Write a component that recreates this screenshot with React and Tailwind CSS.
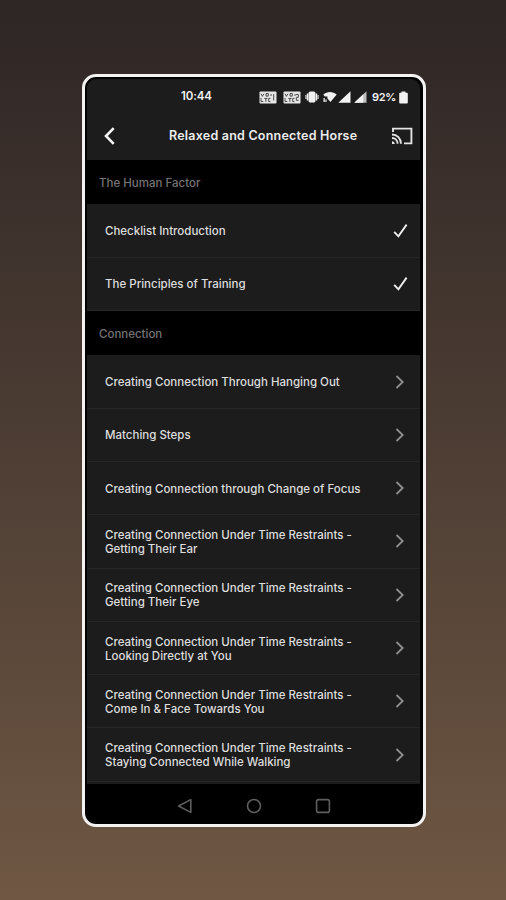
import React from "react";

const sections = [
  {
    title: "The Human Factor",
    lessons: [
      { title: ["Checklist Introduction"], done: true },
      { title: ["The Principles of Training"], done: true },
    ],
  },
  {
    title: "Connection",
    lessons: [
      { title: ["Creating Connection Through Hanging Out"] },
      { title: ["Matching Steps"] },
      { title: ["Creating Connection through Change of Focus"] },
      { title: ["Creating Connection Under Time Restraints -", "Getting Their Ear"] },
      { title: ["Creating Connection Under Time Restraints -", "Getting Their Eye"] },
      { title: ["Creating Connection Under Time Restraints -", "Looking Directly at You"] },
      { title: ["Creating Connection Under Time Restraints -", "Come In & Face Towards You"] },
      { title: ["Creating Connection Under Time Restraints -", "Staying Connected While Walking"] },
    ],
  },
];

export default function App() {
  return (
    <div className="flex h-[900px] w-[506px] flex-col bg-linear-to-b from-[#2e2625] to-[#6f5743] pt-[74px] pl-[82px] font-['Inter',sans-serif]">
      <div className="flex h-[753px] w-[344px] flex-col overflow-hidden rounded-[14px] border-[3px] border-[#f4f2f1] bg-black pt-[2px] pr-[3px] pl-[2px]">
        <div className="flex h-[81px] shrink-0 flex-col rounded-t-[9px] bg-[#1c1c1c]">
          <StatusBar />
          <Header />
        </div>

        <div className="h-[624px] shrink-0 overflow-hidden bg-[#1c1c1c]">
          {sections.map((section) => (
            <section key={section.title}>
              <h2 className="flex h-[44.4px] items-center bg-black pt-[2px] pl-3 text-[11.5px] font-medium text-[#747474]">
                {section.title}
              </h2>
              {section.lessons.map((lesson, idx) => (
                <LessonRow key={idx} lesson={lesson} />
              ))}
            </section>
          ))}
        </div>

        <NavBar />
      </div>
    </div>
  );
}

function StatusBar() {
  return (
    <div className="flex h-[36px] items-center pr-[12px] pl-[94px] text-[11.5px] font-semibold text-[#f2f2f2]">
      <span className="tracking-[-0.1px]">10:44</span>
      <div className="ml-auto flex items-center">
        <VolteIcon sim="1" />
        <div className="w-[6px]" />
        <VolteIcon sim="2" />

        {/* Vibrate */}
        <svg className="ml-[4px] h-3 w-[14px]" viewBox="0 0 14 12" fill="#f2f2f2">
          <rect x="3.6" y="0.5" width="6.8" height="11" rx="1.5" />
          <path d="M1.8 2.5h1.6v7H1.8zM0.4 4h1v4H0.4zM10.6 2.5h1.6v7h-1.6zM12.6 4h1v4h-1z" />
        </svg>

        {/* Wifi */}
        <svg className="ml-[4px] h-3 w-[14px]" viewBox="0 0 14 12" fill="#f2f2f2">
          <path d="M0.3 3.6C4 0.2 10 0.2 13.7 3.6L7.5 11 4.4 7.6V5.4H1.8z" />
          <path d="M0.5 7h1.3v4H0.5zM2.4 8.4h1.2V11H2.4z" />
        </svg>

        <SignalIcon />
        <div className="w-[2px]" />
        <SignalIcon faded />

        <span className="ml-[5px] text-[11px] tracking-[-0.3px]">92%</span>
        <svg className="ml-[3px] h-[13px] w-[9px]" viewBox="0 0 9 13" fill="#f2f2f2">
          <path d="M2.5 0.5h4v1.3H8a.8.8 0 0 1 .8.8v9a.9.9 0 0 1-.9.9H1.1a.9.9 0 0 1-.9-.9v-9a.8.8 0 0 1 .8-.8h1.5z" />
        </svg>
      </div>
    </div>
  );
}

/** Small carrier badge, one per SIM. */
function VolteIcon({ sim }) {
  return (
    <svg className="h-[13px] w-[18px]" viewBox="0 0 18 13" fill="none">
      <rect x="0.5" y="0.5" width="17" height="12" rx="1" fill="#e6e6e6" />
      <g stroke="#4a4a4a" strokeWidth="1">
        <path d="M2 2.8l1.4 2.6 1.4-2.6M7 2.5h2.3v2.6H7zM11 4h2" />
        <path d="M2 7v3.5h2.2M5.3 7.4h3.2M6.9 7.4v3.4M11.5 7.4H9.7v3.2h1.8" />
        {sim === "1" ? <path d="M14.7 3v6.5" /> : <path d="M13 3.5h2.4v2.8H13.3v3h2.4" />}
      </g>
    </svg>
  );
}

function SignalIcon({ faded }) {
  return (
    <svg className="ml-[1px] h-3 w-[13px]" viewBox="0 0 13 12">
      <path d="M0.3 11.7L12.5 0.3v11.4z" fill={faded ? "#bdbdbd" : "#f2f2f2"} />
      {faded && <path d="M0.3 11.7L9.3 3.3v8.4z" fill="#f2f2f2" />}
    </svg>
  );
}

function Header() {
  return (
    <div className="flex h-[41px] items-center pr-[7px] pl-[16px]">
      <svg className="h-[18px] w-[13px]" viewBox="0 0 13 18" fill="none" stroke="#f5f5f5" strokeWidth="2.6">
        <path d="M10.7 1.2L3 9l7.7 7.8" />
      </svg>
      <h1 className="ml-[53px] pt-[1px] whitespace-nowrap text-[12.5px] font-semibold tracking-[0.22px] text-[#ececec]">
        Relaxed and Connected Horse
      </h1>
      <svg className="ml-auto h-[18px] w-[22px]" viewBox="0 0 22 18" fill="none" stroke="#e4e4e4" strokeWidth="1.9">
        <path d="M2 5V1.6h18.4v14.8H13" />
        <path d="M1 7.5c5 0 9 4 9 9.3M1 11c3.2 0 5.6 2.5 5.6 5.8" />
        <path d="M1 14.2a2.8 2.8 0 0 1 2.7 2.8H1z" fill="#e4e4e4" stroke="none" />
      </svg>
    </div>
  );
}

function LessonRow({ lesson }) {
  return (
    <div className="flex h-[53.3px] items-center justify-between border-b border-[#272727] pr-[12px] pl-[18px]">
      <p className="pt-[1px] whitespace-nowrap text-[11.5px] leading-[14px] font-medium text-[#dedede]">
        {lesson.title.map((line) => (
          <span key={line} className="block">
            {line}
          </span>
        ))}
      </p>
      {lesson.done ? (
        <svg className="h-4 w-[15px] shrink-0" viewBox="0 0 15 16" fill="none" stroke="#ededed" strokeWidth="1.9">
          <path d="M1.2 8.8l4.2 4.5L13.6 1.6" />
        </svg>
      ) : (
        <svg className="mr-[3px] h-[14px] w-[10px] shrink-0" viewBox="0 0 10 14" fill="none" stroke="#8f8f8f" strokeWidth="1.8">
          <path d="M1.5 1l6.2 6-6.2 6" />
        </svg>
      )}
    </div>
  );
}

function NavBar() {
  return (
    <nav className="flex h-[40px] shrink-0 items-center pt-[3px] pl-[90px]">
      <svg className="h-4 w-4" viewBox="0 0 16 16" fill="none" stroke="#5e5e5e" strokeWidth="1.6">
        <path d="M1.6 8L13.8 1.6v12.8z" strokeLinejoin="round" />
      </svg>
      <svg className="ml-[53px] h-4 w-4" viewBox="0 0 16 16" fill="none" stroke="#5e5e5e" strokeWidth="1.6">
        <circle cx="8" cy="8" r="6.5" />
      </svg>
      <svg className="ml-[53px] h-4 w-4" viewBox="0 0 16 16" fill="none" stroke="#5e5e5e" strokeWidth="1.6">
        <rect x="1.6" y="1.6" width="12.8" height="12.8" rx="2" />
      </svg>
    </nav>
  );
}
